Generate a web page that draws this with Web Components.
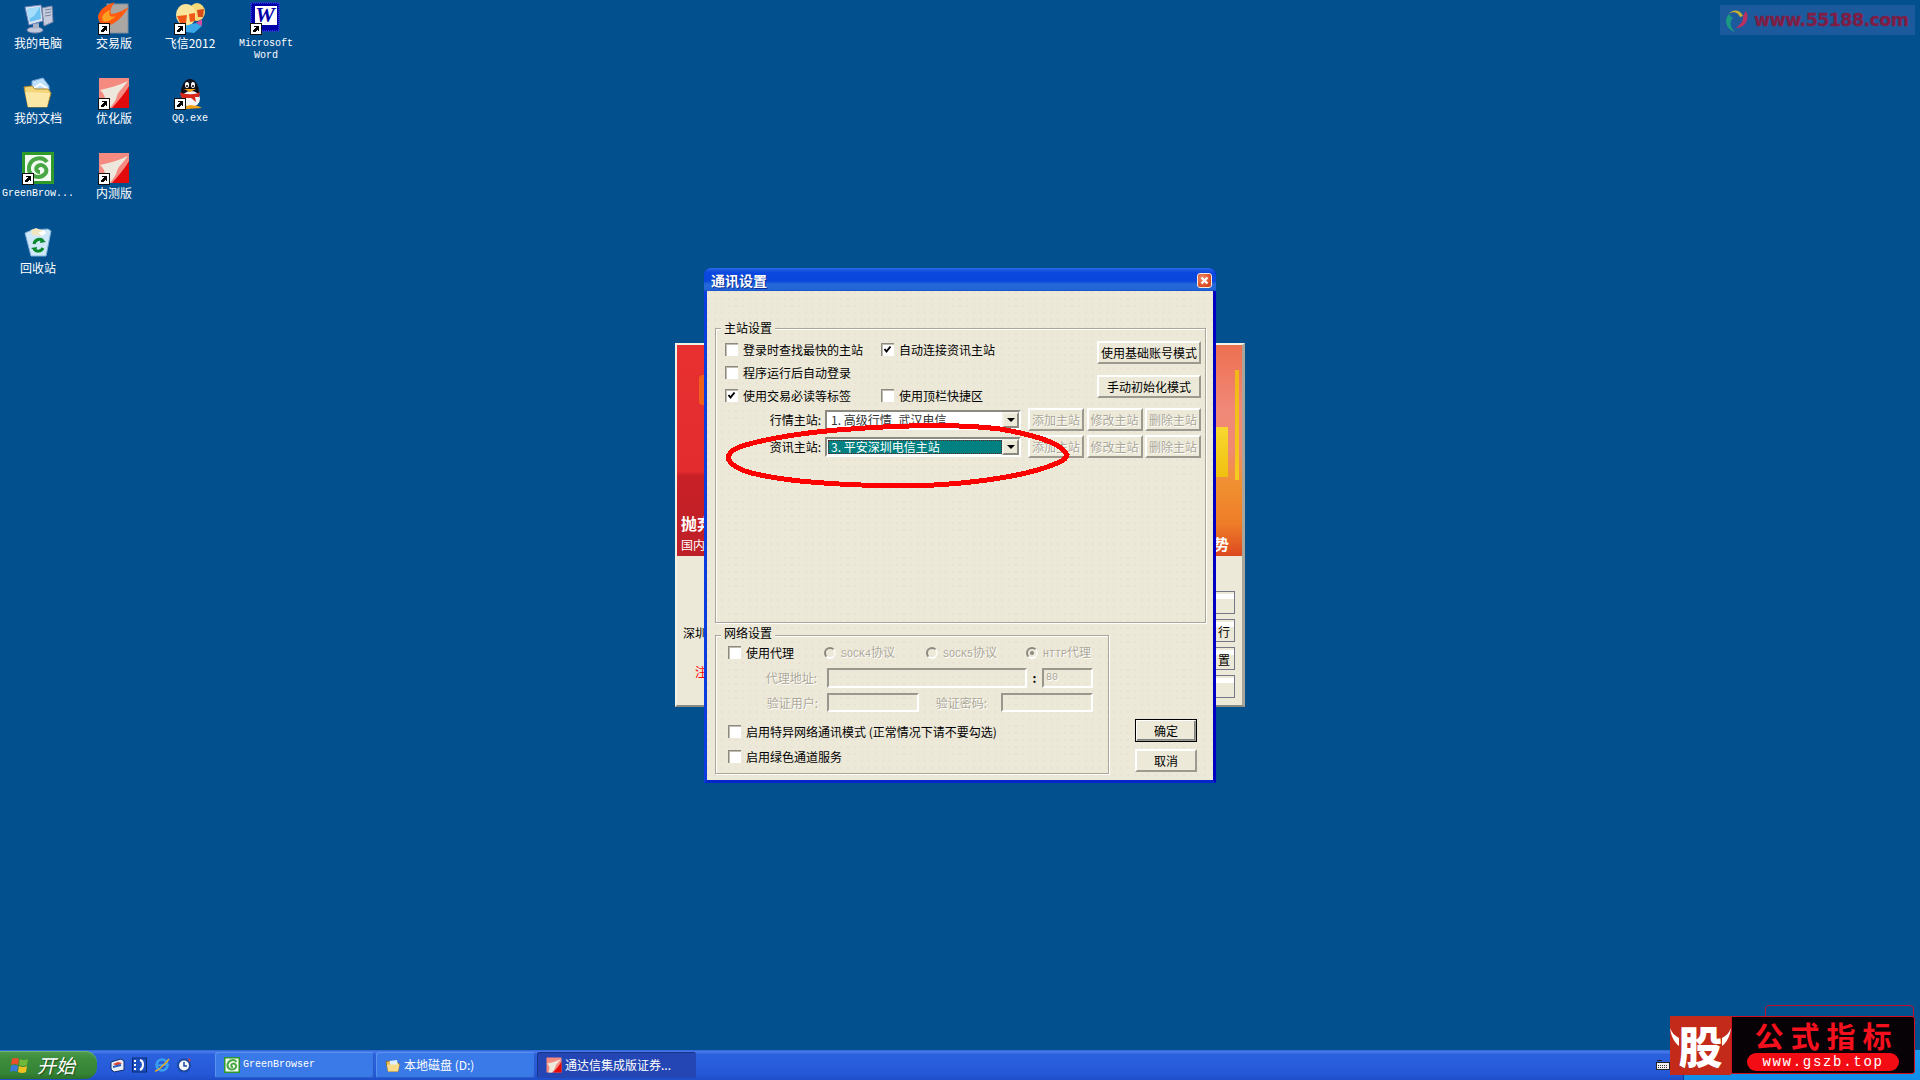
<!DOCTYPE html>
<html>
<head>
<meta charset="utf-8">
<title>通讯设置</title>
<style>
  html, body { margin: 0; padding: 0; background: #03508f; overflow: hidden; }
  body { font: 12px/14px "Noto Sans CJK SC", sans-serif; }
</style>
</head>
<body>
<xp-desktop>
  <desk-icon icon="computer" style="grid-column:1">我的电脑</desk-icon>
  <desk-icon icon="exchange" shortcut>交易版</desk-icon>
  <desk-icon icon="fetion" shortcut>飞信2012</desk-icon>
  <desk-icon icon="word" shortcut mono>Microsoft Word</desk-icon>
  <desk-icon icon="docs" style="grid-column:1">我的文档</desk-icon>
  <desk-icon icon="tile" shortcut>优化版</desk-icon>
  <desk-icon icon="qq" shortcut mono>QQ.exe</desk-icon>
  <desk-icon icon="green" shortcut mono style="grid-column:1">GreenBrow...</desk-icon>
  <desk-icon icon="tile" shortcut>内测版</desk-icon>
  <desk-icon icon="bin" style="grid-column:1">回收站</desk-icon>

  <back-window slot="windows"></back-window>
  <xp-dialog slot="windows" heading="通讯设置">
    <server-group></server-group>
    <network-group></network-group>
  </xp-dialog>
  <red-ring slot="windows"></red-ring>
  <site-mark slot="windows"></site-mark>
  <corner-ad slot="windows"></corner-ad>

  <xp-taskbar slot="taskbar">
    <task-button icon="green" mono>GreenBrowser</task-button>
    <task-button icon="folder">本地磁盘 (D:)</task-button>
    <task-button icon="tile" active>通达信集成版证券...</task-button>
  </xp-taskbar>
</xp-desktop>

<script>
const SMALL_ARROW = `<g shape-rendering="crispEdges"><rect x="0.5" y="21.5" width="11" height="11" fill="#fff" stroke="#111"/><path d="M3 30 L3 28 L6 25 L4 25 L4 24 L9 24 L9 29 L8 29 L8 27 L5 30Z" fill="#000"/></g>`;

const ICONS = {
  computer: `<path d="M3 5 L19 3 L21 19 L7 23Z" fill="#dfe6f2" stroke="#6f86b8"/><path d="M5 7 L18 5 L19 17 L8 20Z" fill="#6cc3f2"/><path d="M5 7 L18 5 L12 14 L7 17Z" fill="#a5defa"/><path d="M20 6 L30 4 L31 20 L22 24Z" fill="#c5cbdc" stroke="#7b86a8"/><path d="M23 8 L29 7 M23 11 L29 10 M23 14 L29 13" stroke="#7a84a0"/><ellipse cx="13" cy="28" rx="8" ry="3" fill="#c3c9dc" stroke="#7985aa"/><path d="M11 22 L17 21 L17 26 L11 27Z" fill="#aab2c9"/>`,
  exchange: `<rect x="9" y="2" width="21" height="29" fill="#a9a6a4"/><rect x="9" y="2" width="21" height="29" fill="none" stroke="#7f8da0"/><path d="M0 14 C2 7 8 3 17 0 C13 5 12 8 13 12 C18 12 24 9 31 5 C25 14 18 22 9 24 C4 25 0 20 0 14Z" fill="#ff5a10"/><path d="M4 15 C6 11 9 9 12 8 C10 13 12 16 18 14 C14 18 8 21 5 19Z" fill="#ffa020"/>`,
  fetion: `<ellipse cx="23" cy="10" rx="8" ry="9" fill="#f6d878"/><ellipse cx="12" cy="13" rx="10" ry="11" fill="#fbe59a"/><path d="M3 14 L13 13 L12 21 L6 21Z" fill="#f05818"/><path d="M15 12 L21 11 L21 19 L16 20Z" fill="#f05818"/><path d="M23 8 L30 7 L29 15 L24 15Z" fill="#d84a18"/><path d="M10 24 L22 21 L28 24 L20 31 L12 30Z" fill="#3aa8e8"/><path d="M22 21 L28 17 L28 24Z" fill="#d050a0"/>`,
  word: `<rect x="1" y="1" width="28" height="28" fill="#0000a8"/><rect x="1" y="1" width="28" height="28" fill="none" stroke="#3030d8" stroke-dasharray="1 1" stroke-width="2"/><rect x="5" y="4" width="22" height="19" fill="#fff"/><text x="15" y="20" text-anchor="middle" font-family="Liberation Serif" font-weight="bold" font-style="italic" font-size="22" fill="#0000a8">W</text>`,
  docs: `<path d="M10 4 L21 1 L27 9 L27 20 L10 20Z" fill="#bfe0fa" stroke="#7aa8d8"/><path d="M11 12 L18 7 L26 12" fill="none" stroke="#fff" stroke-width="2"/><path d="M2 10 L10 9 L13 12 L26 12 L29 16 L25 30 L6 30Z" fill="#f4d67a" stroke="#b08a30"/><path d="M3 15 L28 16 L25 30 L6 30Z" fill="#fbe8a6"/>`,
  tile: `<rect x="1" y="1" width="30" height="30" fill="#f58a80"/><path d="M14 31 C20 24 26 18 31 9 L31 31Z" fill="#e20a0a"/><path d="M2 13 C12 11 22 8 30 4 C24 12 20 15 19 19 C18 24 14 28 12 31 L5 31 C8 24 8 18 2 13Z" fill="#eee8dc"/>`,
  qq: `<ellipse cx="16" cy="16" rx="9" ry="14" fill="#101018"/><ellipse cx="17" cy="22" rx="9" ry="8" fill="#f4f4f4"/><ellipse cx="13" cy="8" rx="2" ry="3" fill="#fff"/><ellipse cx="19" cy="8" rx="2" ry="3" fill="#fff"/><circle cx="13" cy="9" r="1" fill="#000"/><circle cx="19" cy="9" r="1" fill="#000"/><path d="M10 12 L22 12 L16 15Z" fill="#f4a010"/><path d="M6 15 C10 18 22 18 26 15 L25 20 L21 20 L22 25 L17 21 L9 21 L7 20Z" fill="#d62818"/><path d="M10 30 L16 28 L24 29 L28 31 L12 32Z" fill="#f4a010"/>`,
  green: `<rect x="0" y="0" width="32" height="32" fill="#2f9a2a"/><rect x="3" y="3" width="26" height="26" fill="#f4fbf2"/><path d="M25 10 C21 4 9 5 7 15 C6 24 17 28 23 22 C27 17 21 11 16 14 C13 16 14 20 18 20" fill="none" stroke="#49a845" stroke-width="4"/>`,
  bin: `<path d="M3 6 L10 3 L26 2 L29 4 L24 29 L9 29Z" fill="#cfe8f8" stroke="#7fb0d8"/><path d="M9 3 L14 1 L22 4 L20 9 L10 8Z" fill="#f0e6c0"/><path d="M16 6 L22 3 L24 6 L20 9Z" fill="#fff"/><path d="M12 17 C13 12 19 11 21 14 M21 21 C19 25 14 25 12 22" fill="none" stroke="#0a8a2a" stroke-width="3"/><path d="M19 11 L24 15 L18 16Z M14 25 L9 21 L15 20Z" fill="#0a8a2a"/>`,
  folder: `<path d="M2 9 L10 8 L12 11 L25 11 L29 14 L26 29 L6 29Z" fill="#e8b848" stroke="#8a6a20" stroke-width="1.5"/><path d="M9 8 L24 6 L26 18 L11 20Z" fill="#dff0ff"/><path d="M4 15 L29 15 L26 29 L6 29Z" fill="#f8dc8a"/>`
};

class XpDesktop extends HTMLElement {
  constructor() {
    super();
    this.attachShadow({ mode: "open" }).innerHTML = `
    <style>
      :host {
        display: flex;
        flex-direction: column;
        position: relative;
        width: 1920px;
        height: 1080px;
        overflow: hidden;
        background: #03508f;
        color: #000;
      }
      .icons {
        flex: 1;
        display: grid;
        grid-template-columns: repeat(4, 76px);
        grid-auto-rows: 75px;
        align-content: start;
      }
    </style>
    <div class="icons"><slot></slot></div>
    <slot name="windows"></slot>
    <slot name="taskbar"></slot>`;
  }
}

class DeskIcon extends HTMLElement {
  constructor() {
    super();
    const art = ICONS[this.getAttribute("icon")];
    const arrow = this.hasAttribute("shortcut") ? SMALL_ARROW : "";
    this.attachShadow({ mode: "open" }).innerHTML = `
    <style>
      :host {
        display: flex;
        flex-direction: column;
        align-items: center;
        padding-top: 2px;
        color: #fff;
        font: 12px/14px "Noto Sans CJK SC", sans-serif;
        text-align: center;
      }
      :host([mono]) { font: 10px/12px "Liberation Mono", monospace; }
      svg { display: block; margin-bottom: 2px; flex: none; overflow: visible; }
      .label { width: 76px; }
      :host([mono]) .label { padding-top: 2px; }
    </style>
    <svg width="32" height="32" viewBox="0 0 32 32">${art}${arrow}</svg>
    <div class="label"><slot></slot></div>`;
  }
}

class BackWindow extends HTMLElement {
  constructor() {
    super();
    this.attachShadow({ mode: "open" }).innerHTML = `
    <style>
      :host {
        position: absolute;
        left: 675px;
        top: 343px;
        width: 570px;
        height: 364px;
        box-sizing: border-box;
        display: flex;
        flex-direction: column;
        background: #ece9d8;
        border: 2px solid #f4f2e6;
        border-right: 3px solid #a8a69a;
        border-bottom: 2px solid #8c8a80;
        font: 12px/14px "Noto Sans CJK SC", sans-serif;
      }
      .banner {
        height: 211px;
        flex: none;
        display: flex;
      }
      .red {
        flex: 1;
        padding: 167px 0 0 4px;
        color: #fff;
        background: linear-gradient(#e83030 0, #e22c2e 60%, #c82026 62%, #be2028 100%);
      }
      .big { font-size: 16px; line-height: 22px; font-weight: 700; margin-bottom: 4px; }
      .badge {
        position: absolute;
        left: 22px;
        top: 30px;
        width: 12px;
        height: 30px;
        background: #f06018;
        border-radius: 4px;
      }
      .warm {
        flex: 1;
        display: flex;
        flex-direction: column;
        align-items: flex-end;
        justify-content: flex-end;
        padding: 0 13px 5px 0;
        color: #fff;
        font-size: 15px;
        font-weight: 700;
        background:
          linear-gradient(#f8d830, #f0c010) right 14px top 82px / 12px 50px no-repeat,
          linear-gradient(#f0b818, #f4cc20) right 3px top 25px / 4px 110px no-repeat,
          linear-gradient(#ee7050 0, #f08878 30%, #f08a70 50%, #f09030 66%, #ee7c28 85%, #dc4820 100%);
      }
      .lower {
        flex: 1;
        display: flex;
        justify-content: space-between;
        padding: 35px 7px 0 6px;
      }
      .notes { padding-top: 35px; }
      .notes .warn { color: #f00; margin: 25px 0 0 12px; }
      .keys { display: flex; flex-direction: column; gap: 5px; }
      .keys div {
        width: 90px;
        height: 21px;
        box-sizing: content-box;
        border: 1px solid #77778a;
        padding-right: 4px;
        text-align: right;
        line-height: 23px;
        background: linear-gradient(#ece9d8 2px, #fff 2px, #fff 7px, #ece9d8 7px);
      }
    </style>
    <div class="banner">
      <div class="red">
        <div class="badge"></div>
        <div class="big">抛弃</div>
        <div>国内</div>
      </div>
      <div class="warm">势</div>
    </div>
    <div class="lower">
      <div class="notes"><div>深圳</div><div class="warn">注</div></div>
      <div class="keys"><div></div><div>行</div><div>置</div><div></div></div>
    </div>`;
  }
}

class XpDialog extends HTMLElement {
  constructor() {
    super();
    this.attachShadow({ mode: "open" }).innerHTML = `
    <style>
      :host {
        position: absolute;
        left: 704px;
        top: 268px;
        width: 512px;
        height: 515px;
        box-sizing: border-box;
        display: flex;
        flex-direction: column;
        border: solid #0a3ce0;
        border-width: 0 3px 3px;
        border-right-color: #0000c4;
        border-bottom-color: #0426c8;
        border-radius: 7px 7px 0 0;
        background: #0831d9;
        font: 12px/14px "Noto Sans CJK SC", sans-serif;
      }
      .title {
        height: 23px;
        flex: none;
        margin: 0 -3px;
        padding: 0 4px 0 7px;
        display: flex;
        align-items: center;
        justify-content: space-between;
        border-radius: 7px 7px 0 0;
        background: linear-gradient(#2a6ee4 0, #1a58e2 2px, #0a47de 5px, #0a48dc 13px, #2468da 16px, #2266d8 21px, #1a52c8 23px);
        color: #fff;
        font-size: 14px;
        font-weight: 700;
        text-shadow: 1px 1px 0 #0a2a90;
      }
      .close {
        width: 15px;
        height: 15px;
        margin-top: 2px;
        box-sizing: border-box;
        border: 1px solid #f4e8e0;
        border-radius: 3px;
        background: radial-gradient(circle at 35% 35%, #f0906c, #d84a20 70%);
        display: block;
      }
      .close svg { display: block; }
      .client {
        flex: 1;
        box-sizing: border-box;
        display: flex;
        flex-direction: column;
        gap: 12px;
        padding: 37px 7px 0 8px;
        background-color: #ece9d8;
        background-image: radial-gradient(circle at 1px 1px, rgba(226, 204, 204, .28) .7px, transparent 1px);
        background-size: 7px 7px;
      }
    </style>
    <div class="title">
      <span>${this.getAttribute("heading")}</span>
      <span class="close"><svg width="13" height="13" viewBox="0 0 13 13"><path d="M3.5 3.5 L9.5 9.5 M9.5 3.5 L3.5 9.5" stroke="#fff" stroke-width="2.2"/></svg></span>
    </div>
    <div class="client"><slot></slot></div>`;
  }
}

class XpGroup extends HTMLElement {
  constructor() {
    super();
    this.attachShadow({ mode: "open" }).innerHTML = `
    <style>
      :host {
        display: flex;
        flex-direction: column;
        box-sizing: border-box;
        border: 1px solid #aca899;
        box-shadow: 1px 1px 0 #fff, inset 1px 1px 0 #fff;
      }
      .legend {
        flex: none;
        align-self: flex-start;
        height: 14px;
        margin: var(--legend-top, -8px) 0 0 5px;
        padding: 0 3px;
        background: #ece9d8;
      }
      .body { flex: 1; display: flex; flex-direction: column; }
    </style>
    <div class="legend">${this.getAttribute("label")}</div>
    <div class="body"><slot></slot></div>`;
  }
}

class XpCheck extends HTMLElement {
  constructor() {
    super();
    const tick = this.hasAttribute("checked")
      ? `<svg width="13" height="13" viewBox="0 0 13 13"><path d="M3.5 6 L5.5 8.5 L9.5 3.5" fill="none" stroke="#000" stroke-width="2"/></svg>` : "";
    this.attachShadow({ mode: "open" }).innerHTML = `
    <style>
      :host {
        display: inline-flex;
        align-items: center;
        gap: var(--check-gap, 5px);
        height: 13px;
        white-space: nowrap;
      }
      .box {
        flex: none;
        width: 13px;
        height: 13px;
        background: #fff;
        box-shadow: inset 1px 1px 0 #8c8a80, inset 2px 2px 0 #c0bdb0;
      }
      svg { display: block; }
    </style>
    <span class="box">${tick}</span><span><slot></slot></span>`;
  }
}

class XpRadio extends HTMLElement {
  constructor() {
    super();
    this.attachShadow({ mode: "open" }).innerHTML = `
    <style>
      :host {
        display: inline-flex;
        align-items: center;
        gap: 5px;
        height: 13px;
        color: #aca899;
        text-shadow: 1px 1px 0 #fff;
        white-space: nowrap;
      }
      .dot {
        flex: none;
        box-sizing: border-box;
        width: 12px;
        height: 12px;
        border-radius: 50%;
        border: 2px solid;
        border-color: #8c8a80 #f8f8f0 #fff #8c8a80;
        display: flex;
        align-items: center;
        justify-content: center;
      }
      .dot i { display: none; width: 4px; height: 4px; border-radius: 50%; background: #8c8a80; }
      :host([selected]) .dot i { display: block; }
    </style>
    <span class="dot"><i></i></span><span><slot></slot></span>`;
  }
}

class XpButton extends HTMLElement {
  constructor() {
    super();
    this.attachShadow({ mode: "open" }).innerHTML = `
    <style>
      :host {
        display: flex;
        align-items: center;
        justify-content: center;
        box-sizing: border-box;
        height: 23px;
        border-style: solid;
        border-width: 2px;
        border-color: #fff #9c9a8e #9c9a8e #fff;
        background: #ece9d8;
        color: #000;
        white-space: nowrap;
      }
      :host([disabled]) { color: #aca899; text-shadow: 1px 1px 0 #fff; }
      :host([default]) { outline: 1px solid #000; outline-offset: -1px; box-shadow: inset -1px -1px 0 #808080; }
    </style>
    <slot></slot>`;
  }
}

class XpCombo extends HTMLElement {
  constructor() {
    super();
    this.attachShadow({ mode: "open" }).innerHTML = `
    <style>
      :host {
        display: flex;
        align-items: stretch;
        box-sizing: border-box;
        height: 20px;
        width: 196px;
        border: 2px solid;
        border-color: #8c8a80 #fff #fff #8c8a80;
        background: #fff;
        overflow: hidden;
      }
      .text {
        flex: 1;
        display: flex;
        align-items: center;
        padding-left: 4px;
        color: #333;
        white-space: nowrap;
        overflow: hidden;
      }
      :host([focused]) .text {
        margin: 1px 0 1px 1px;
        padding-left: 3px;
        background: #008080;
        color: #fff;
        outline: 1px dotted #602020;
        outline-offset: -1px;
      }
      .arrow {
        flex: none;
        width: 17px;
        box-sizing: border-box;
        border: 2px solid;
        border-color: #f4f2e6 #8c8a80 #8c8a80 #f4f2e6;
        background: #ece9d8;
        display: flex;
        align-items: center;
        justify-content: center;
      }
      .arrow i { border: 4px solid transparent; border-top: 4px solid #000; border-bottom: 0; }
    </style>
    <div class="text"><slot></slot></div>
    <div class="arrow"><i></i></div>`;
  }
}

class XpField extends HTMLElement {
  constructor() {
    super();
    this.attachShadow({ mode: "open" }).innerHTML = `
    <style>
      :host {
        display: flex;
        align-items: center;
        flex: none;
        box-sizing: border-box;
        padding-left: 2px;
        border: 2px solid;
        border-color: #9a988c #fff #fff #9a988c;
        color: #aca899;
        font: 10px/12px "Liberation Mono", monospace;
      }
    </style>
    <slot></slot>`;
  }
}

class ServerGroup extends HTMLElement {
  constructor() {
    super();
    const crud = `
      <xp-button disabled>添加主站</xp-button>
      <xp-button disabled>修改主站</xp-button>
      <xp-button disabled>删除主站</xp-button>`;
    this.attachShadow({ mode: "open" }).innerHTML = `
    <style>
      :host { display: block; height: 295px; }
      xp-group { height: 100%; }
      .top {
        display: flex;
        justify-content: space-between;
        height: 67px;
        margin: 6px 4px 0 9px;
      }
      .checks {
        display: grid;
        grid-template-columns: 156px auto;
        grid-template-rows: 13px 13px 13px;
        row-gap: 10px;
        padding-top: 2px;
        justify-items: start;
        align-content: start;
      }
      .wide { grid-column: 1 / 3; }
      .modes { display: flex; flex-direction: column; gap: 11px; width: 104px; }
      .server {
        display: flex;
        align-items: center;
        height: 23px;
        margin: 0 4px 4px 9px;
      }
      .server span { width: 96px; padding-right: 4px; box-sizing: content-box; text-align: right; flex: none; }
      .crud { display: grid; grid-template-columns: 56px 56px 56px; column-gap: 2.5px; margin-left: 7px; }
    </style>
    <xp-group label="主站设置">
      <div class="top">
        <div class="checks">
          <xp-check>登录时查找最快的主站</xp-check>
          <xp-check checked>自动连接资讯主站</xp-check>
          <xp-check class="wide">程序运行后自动登录</xp-check>
          <xp-check checked>使用交易必读等标签</xp-check>
          <xp-check>使用顶栏快捷区</xp-check>
        </div>
        <div class="modes">
          <xp-button>使用基础账号模式</xp-button>
          <xp-button>手动初始化模式</xp-button>
        </div>
      </div>
      <div class="server">
        <span>行情主站:</span>
        <xp-combo>1. 高级行情_武汉电信</xp-combo>
        <div class="crud">${crud}</div>
      </div>
      <div class="server">
        <span>资讯主站:</span>
        <xp-combo focused>3. 平安深圳电信主站</xp-combo>
        <div class="crud">${crud}</div>
      </div>
    </xp-group>`;
  }
}

class NetworkGroup extends HTMLElement {
  constructor() {
    super();
    this.attachShadow({ mode: "open" }).innerHTML = `
    <style>
      :host { display: flex; height: 139px; --legend-top: -10px; }
      xp-group { width: 394px; flex: none; }
      .pad { padding: 6px 0 0 12px; }
      .m { font: 10px/12px "Liberation Mono", monospace; }
      .proxy { display: grid; grid-template-columns: 96px 102px 100px auto; height: 13px; }
      .line { display: flex; align-items: center; color: #aca899; text-shadow: 1px 1px 0 #fff; }
      .line.addr { height: 20px; margin-top: 9px; }
      .line.auth { height: 19px; margin-top: 5px; }
      .tag { flex: none; box-sizing: border-box; text-align: right; }
      .colon { flex: none; width: 15px; text-align: center; color: #000; font-weight: 700; text-shadow: none; }
      .opt { margin-top: 13px; display: flex; }
      .opt + .opt { margin-top: 12px; }
      .actions {
        margin-left: 26px;
        padding-top: 84px;
        display: flex;
        flex-direction: column;
        gap: 7px;
        width: 62px;
      }
    </style>
    <xp-group label="网络设置">
      <div class="pad">
        <div class="proxy">
          <xp-check>使用代理</xp-check>
          <xp-radio><span class="m">SOCK4</span>协议</xp-radio>
          <xp-radio><span class="m">SOCK5</span>协议</xp-radio>
          <xp-radio selected><span class="m">HTTP</span>代理</xp-radio>
        </div>
        <div class="line addr">
          <span class="tag" style="width:99px;padding-right:10px">代理地址:</span>
          <xp-field style="width:200px;height:20px"></xp-field>
          <span class="colon">:</span>
          <xp-field style="width:51px;height:20px">80</xp-field>
        </div>
        <div class="line auth">
          <span class="tag" style="width:99px;padding-right:9px">验证用户:</span>
          <xp-field style="width:92px;height:19px"></xp-field>
          <span class="tag" style="width:82px;padding-right:14px">验证密码:</span>
          <xp-field style="width:92px;height:19px"></xp-field>
        </div>
        <div class="opt"><xp-check>启用特异网络通讯模式 (正常情况下请不要勾选)</xp-check></div>
        <div class="opt"><xp-check>启用绿色通道服务</xp-check></div>
      </div>
    </xp-group>
    <div class="actions">
      <xp-button default>确定</xp-button>
      <xp-button>取消</xp-button>
    </div>`;
  }
}

class RedRing extends HTMLElement {
  constructor() {
    super();
    this.attachShadow({ mode: "open" }).innerHTML = `
    <style>
      :host { position: absolute; left: 0; top: 0; width: 0; height: 0; pointer-events: none; }
      svg { position: absolute; left: 715px; top: 415px; }
    </style>
    <svg width="365" height="85" viewBox="715 415 365 85" shape-rendering="crispEdges">
      <path d="M1067 455 C1062 444 1040 436 1000 429 C960 424 900 425 837 430 C790 434 750 442 735 449 C724 456 727 463 742 470 C770 480 830 485 900 486 C960 486 1020 477 1050 466 C1060 462 1066 460 1067 455Z" fill="none" stroke="#f00" stroke-width="5"/>
    </svg>`;
  }
}

class SiteMark extends HTMLElement {
  constructor() {
    super();
    this.attachShadow({ mode: "open" }).innerHTML = `
    <style>
      :host {
        position: absolute;
        left: 1720px;
        top: 5px;
        width: 195px;
        height: 30px;
        display: flex;
        align-items: center;
        gap: 3px;
        padding-left: 4px;
        box-sizing: border-box;
        background: #1c5a9e;
        color: #7e1e46;
        font: 700 17.5px/30px "DejaVu Sans", sans-serif;
        letter-spacing: -.6px;
        -webkit-text-stroke: .3px #7e1e46;
      }
      svg { flex: none; display: block; }
    </style>
    <svg width="27" height="28" viewBox="0 0 27 28">
      <path d="M19 10 C16 3 8 3 5 8 C9 5 14 6 16 11Z" fill="#c8b030"/>
      <path d="M5 8 C0 13 1 23 11 26 C6 21 5 15 9 12 C7 11 6 9 5 8Z" fill="#1a9a80"/>
      <path d="M22 5 C26 12 22 22 12 22 C17 18 20 14 19 10 C20 8 21 6 22 5Z" fill="#b83060"/>
    </svg>
    <span>www.55188.com</span>`;
  }
}

class CornerAd extends HTMLElement {
  constructor() {
    super();
    this.attachShadow({ mode: "open" }).innerHTML = `
    <style>
      :host {
        position: absolute;
        left: 1670px;
        top: 1016px;
        width: 245px;
        height: 59px;
        display: flex;
        z-index: 2;
      }
      .back {
        position: absolute;
        left: 95px;
        top: -11px;
        width: 149px;
        height: 20px;
        box-sizing: border-box;
        border: 1px solid #c01030;
        border-radius: 4px 4px 0 0;
      }
      .bull {
        position: relative;
        flex: none;
        width: 61px;
        display: flex;
        align-items: center;
        justify-content: center;
        background: #c42a1a;
        color: #fff;
        font: 900 44px/59px "Noto Sans CJK SC", sans-serif;
      }
      .horn { position: absolute; top: 10px; display: block; }
      .panel {
        position: relative;
        flex: 1;
        box-sizing: border-box;
        height: 58px;
        display: flex;
        flex-direction: column;
        align-items: center;
        border: 1px solid #d01020;
        border-radius: 0 3px 3px 0;
        background: #060206;
      }
      .name {
        color: #f4101c;
        font: 700 29px/36px "Noto Sans CJK SC", sans-serif;
        letter-spacing: 7px;
        margin-right: -7px;
        height: 36px;
      }
      .url {
        width: 152px;
        height: 18px;
        border-radius: 9px;
        background: #f40c14;
        color: #fff;
        text-align: center;
        font: 400 14px/18px "Liberation Mono", monospace;
        letter-spacing: 1.7px;
      }
    </style>
    <div class="back"></div>
    <div class="bull">
      <svg class="horn" style="left:0" width="10" height="22" viewBox="0 0 10 22"><path d="M0 2 C1 10 4 16 9 20 L9 12 C5 10 2 7 0 2Z" fill="#fff"/></svg>
      股
      <svg class="horn" style="right:0" width="10" height="22" viewBox="0 0 10 22"><path d="M10 2 C9 10 6 16 1 20 L1 12 C5 10 8 7 10 2Z" fill="#fff"/></svg>
    </div>
    <div class="panel">
      <div class="name">公式指标</div>
      <div class="url">www.gszb.top</div>
    </div>`;
  }
}

class TaskButton extends HTMLElement {
  constructor() {
    super();
    this.attachShadow({ mode: "open" }).innerHTML = `
    <style>
      :host {
        display: flex;
        align-items: center;
        gap: 3px;
        box-sizing: border-box;
        width: 159px;
        height: 26px;
        padding-left: 9px;
        border-radius: 3px;
        background: #3a7ae8;
        box-shadow: inset 1px 1px 0 #5a92f0, inset -1px -1px 0 #2a5cc8;
        color: #fff;
        white-space: nowrap;
        overflow: hidden;
        font: 12px/14px "Noto Sans CJK SC", sans-serif;
      }
      :host([mono]) { font: 10px/12px "Liberation Mono", monospace; }
      :host([active]) { background: #2346b4; box-shadow: inset 1px 1px 0 #1a3288; }
      svg { flex: none; display: block; }
    </style>
    <svg width="16" height="16" viewBox="0 0 32 32">${ICONS[this.getAttribute("icon")]}</svg>
    <slot></slot>`;
  }
}

class XpTaskbar extends HTMLElement {
  constructor() {
    super();
    this.attachShadow({ mode: "open" }).innerHTML = `
    <style>
      :host {
        flex: none;
        display: flex;
        align-items: center;
        height: 30px;
        background: linear-gradient(#2e62dc 0, #4a7eea 2px, #2c62de 4px, #2458d8 24px, #1e4ec8 30px);
      }
      .start {
        flex: none;
        width: 97px;
        height: 28px;
        box-sizing: border-box;
        display: flex;
        align-items: center;
        gap: 8px;
        padding-left: 10px;
        border-radius: 0 12px 12px 0;
        background: linear-gradient(#4d9a4d 0, #3c8c3c 30%, #358435 80%, #2a702a 100%);
        box-shadow: inset 0 1px 0 #6ab56a;
        color: #fff;
        font: italic 19px/28px "Noto Sans CJK SC", sans-serif;
        text-shadow: 1px 1px 1px #1c4c1c;
      }
      .quick { display: flex; align-items: center; gap: 7px; margin-left: 12px; width: 106px; flex: none; }
      .quick svg { display: block; flex: none; }
      .tasks { display: flex; gap: 2px; flex: 1; }
      .kbd { flex: none; margin-right: 13px; display: block; }
      .tray {
        flex: none;
        width: 237px;
        height: 30px;
        background: linear-gradient(#1a9cf0 0, #108ee8 100%);
        box-shadow: inset 1px 0 0 #083a90;
      }
    </style>
    <div class="start">
      <svg width="19" height="17" viewBox="0 0 19 17">
        <path d="M2 2 Q5 0 9 2 L8 8 Q5 6 1 8Z" fill="#e8502a"/>
        <path d="M10 2 Q14 4 18 2 L17 8 Q13 10 9 8Z" fill="#70b83a"/>
        <path d="M1 9 Q4 7 8 9 L7 15 Q4 13 0 15Z" fill="#3a78d8"/>
        <path d="M9 9 Q13 11 17 9 L16 15 Q12 17 8 15Z" fill="#f0c020"/>
      </svg>
      <span>开始</span>
    </div>
    <div class="quick">
      <svg width="16" height="16" viewBox="0 0 16 16"><path d="M2 5 L12 2 L15 4 L15 13 L5 15 L2 12Z" fill="#e8eef8" stroke="#13306e"/><path d="M4 7 L9 5 L13 6 L8 9Z" fill="#e04030"/><path d="M4 10 L12 8" stroke="#2a60c0" stroke-width="2"/></svg>
      <svg width="15" height="16" viewBox="0 0 15 16"><rect x="0.5" y="1" width="14" height="14" fill="#1c50c0" stroke="#0c2a70"/><rect x="2" y="3" width="2" height="2" fill="#fff"/><rect x="2" y="7" width="2" height="2" fill="#fff"/><rect x="2" y="11" width="2" height="2" fill="#fff"/><path d="M8 3 C12 4 12 11 8 13" fill="none" stroke="#fff" stroke-width="2"/></svg>
      <svg width="16" height="16" viewBox="0 0 16 16"><ellipse cx="8" cy="8" rx="5.5" ry="5.5" fill="none" stroke="#3aa0f0" stroke-width="2.5"/><path d="M3 8.5 L13 7.5" stroke="#3aa0f0" stroke-width="2"/><path d="M1 14 C4 14 12 6 15 2" fill="none" stroke="#e8b020" stroke-width="1.5"/></svg>
      <svg width="15" height="16" viewBox="0 0 15 16"><circle cx="7" cy="8.5" r="6" fill="#f4f6fc" stroke="#1a48a0" stroke-width="2"/><path d="M7 5 L7 9 L10 9" fill="none" stroke="#1a48a0" stroke-width="1.5"/><path d="M11 1 L14 3 L12 5Z" fill="#e04030"/></svg>
    </div>
    <div class="tasks"><slot></slot></div>
    <svg class="kbd" width="14" height="10" viewBox="0 0 14 10" shape-rendering="crispEdges"><rect x="0.5" y="2.5" width="13" height="7" fill="#f0f0f0" stroke="#222"/><path d="M2 5 H12 M2 7 H12" stroke="#333" stroke-dasharray="1 1"/><rect x="1" y="0" width="5" height="1" fill="#222"/></svg>
    <div class="tray"></div>`;
  }
}

customElements.define("xp-desktop", XpDesktop);
customElements.define("desk-icon", DeskIcon);
customElements.define("back-window", BackWindow);
customElements.define("xp-dialog", XpDialog);
customElements.define("xp-group", XpGroup);
customElements.define("xp-check", XpCheck);
customElements.define("xp-radio", XpRadio);
customElements.define("xp-button", XpButton);
customElements.define("xp-combo", XpCombo);
customElements.define("xp-field", XpField);
customElements.define("server-group", ServerGroup);
customElements.define("network-group", NetworkGroup);
customElements.define("red-ring", RedRing);
customElements.define("site-mark", SiteMark);
customElements.define("corner-ad", CornerAd);
customElements.define("task-button", TaskButton);
customElements.define("xp-taskbar", XpTaskbar);
</script>
</body>
</html>
